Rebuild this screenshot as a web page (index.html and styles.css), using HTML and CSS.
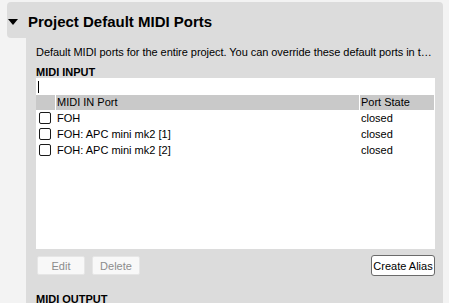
FILE: index.html
```html
<!DOCTYPE html>
<html>
<head>
<meta charset="utf-8">
<link rel="stylesheet" href="styles.css">
</head>
<body>
<div class="section">
  <div class="section-header">
    <svg class="caret" width="10" height="6" viewBox="0 0 10 6"><polygon points="0,0 10,0 5,6" fill="#000"/></svg>
    <h1 class="title">Project Default MIDI Ports</h1>
  </div>
  <div class="section-body">
    <p class="desc">Default MIDI ports for the entire project. You can override these default ports in the individual scenes and cues.</p>
    <div class="label">MIDI INPUT</div>
    <div class="listbox">
      <div class="filter"><span class="text-caret"></span></div>
      <div class="grid head">
        <div class="cell"></div>
        <div class="cell">MIDI IN Port</div>
        <div class="cell">Port State</div>
      </div>
      <div class="grid row">
        <div class="cell"><span class="check"></span></div>
        <div class="cell">FOH</div>
        <div class="cell">closed</div>
      </div>
      <div class="grid row">
        <div class="cell"><span class="check"></span></div>
        <div class="cell">FOH: APC mini mk2 [1]</div>
        <div class="cell">closed</div>
      </div>
      <div class="grid row">
        <div class="cell"><span class="check"></span></div>
        <div class="cell">FOH: APC mini mk2 [2]</div>
        <div class="cell">closed</div>
      </div>
    </div>
    <div class="actions">
      <button class="btn disabled">Edit</button>
      <button class="btn disabled">Delete</button>
      <span class="spacer"></span>
      <button class="btn primary">Create Alias</button>
    </div>
    <div class="label out">MIDI OUTPUT</div>
  </div>
</div>
</body>
</html>
```

FILE: styles.css
```css
html, body {
  margin: 0;
  padding: 0;
  background: #f3f3f3;
  font-family: "Liberation Sans", Arial, sans-serif;
  font-size: 11px;
  color: #000;
  overflow: hidden;
}
body {
  padding-top: 2px;
  height: 301px;
}
.section {
  margin-left: 7px;
  width: 436px;
}
.section-header {
  height: 36px;
  background: #dcdcdc;
  border-radius: 4px 4px 0 4px;
  display: flex;
  align-items: center;
  padding-left: 1px;
}
.caret {
  display: block;
  margin-top: 3px;
}
.title {
  margin: 0 0 0 10px;
  font-size: 15px;
  font-weight: bold;
  line-height: 18px;
  padding-top: 4px;
}
.section-body {
  margin-left: 19px;
  background: #dcdcdc;
  padding: 8px 8px 0 10px;
  height: 257px;
  overflow: hidden;
}
.desc {
  margin: 0;
  line-height: 13px;
  height: 13px;
  white-space: nowrap;
  overflow: hidden;
  text-overflow: ellipsis;
  letter-spacing: -0.05px;
}
.label {
  margin-top: 7px;
  font-weight: bold;
  line-height: 12px;
  height: 12px;
}
.listbox {
  background: #fff;
  height: 171px;
}
.filter {
  height: 17px;
  padding: 3px 0 0 2px;
  box-sizing: border-box;
}
.text-caret {
  display: block;
  width: 1px;
  height: 12px;
  background: #000;
}
.grid {
  display: grid;
  grid-template-columns: 19px 303px 74px;
  column-gap: 1px;
  width: 398px;
}
.head {
  height: 15px;
  background: #fff;
}
.head .cell {
  background: #c9c9c9;
  line-height: 15px;
  padding-left: 1px;
}
.row {
  height: 16px;
}
.row .cell {
  line-height: 16px;
  padding-left: 1px;
  display: flex;
  align-items: center;
}
.row .cell:first-child {
  padding-left: 3px;
}
.check {
  display: block;
  width: 12px;
  height: 12px;
  box-sizing: border-box;
  border: 1px solid #1a1a1a;
  border-radius: 2px;
  background: #fff;
}
.actions {
  display: flex;
  align-items: center;
  margin-top: 6px;
  height: 21px;
  gap: 7px;
  padding-left: 1px;
  width: 398px;
}
.spacer {
  flex: 1;
}
.btn {
  font-family: "Liberation Sans", Arial, sans-serif;
  font-size: 11px;
  padding: 0;
  margin: 0;
  box-sizing: border-box;
}
.btn.disabled {
  width: 48px;
  height: 19px;
  background: #f8f8f8;
  border: 1px solid #e6e6e6;
  border-radius: 2px;
  color: #8c8c8c;
}
.btn.primary {
  width: 64px;
  height: 21px;
  background: #fff;
  border: 1px solid #6a6a6a;
  border-radius: 3px;
  color: #000;
}
.label.out {
  margin-top: 17px;
}
```
